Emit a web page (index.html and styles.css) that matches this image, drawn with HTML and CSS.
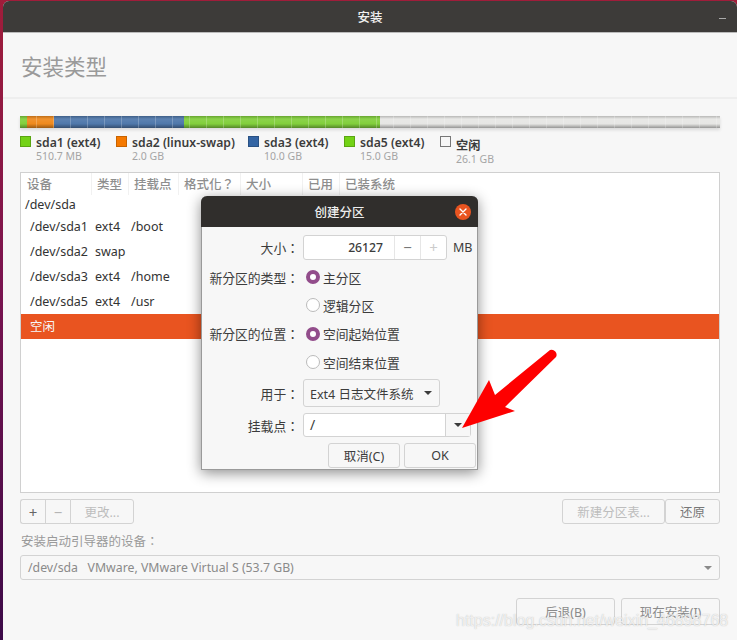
FILE: index.html
```html
<!DOCTYPE html>
<html>

<head>
  <meta charset="utf-8">
  <title>安装</title>
  <link rel="stylesheet" href="styles.css">
</head>

<body>
<div class="window">
  <div class="titlebar">
    <span class="titlebar-text">安装</span>
    <span class="minimize"></span>
  </div>
  <div class="page-head">安装类型</div>
  <div class="content">

    <div class="diskbar">
      <div class="seg green seg1"></div>
      <div class="seg orange seg2"></div>
      <div class="seg blue seg3"></div>
      <div class="seg green seg4"></div>
      <div class="seg free seg5"></div>
    </div>

    <div class="legend">
      <div class="legend-item"><span class="swatch green"></span><div><div class="legend-name">sda1 (ext4)</div><div class="legend-size">510.7 MB</div></div></div>
      <div class="legend-item"><span class="swatch orange"></span><div><div class="legend-name">sda2 (linux-swap)</div><div class="legend-size">2.0 GB</div></div></div>
      <div class="legend-item"><span class="swatch blue"></span><div><div class="legend-name">sda3 (ext4)</div><div class="legend-size">10.0 GB</div></div></div>
      <div class="legend-item"><span class="swatch green"></span><div><div class="legend-name">sda5 (ext4)</div><div class="legend-size">15.0 GB</div></div></div>
      <div class="legend-item"><span class="swatch free"></span><div class="legend-free"><div class="legend-name">空闲</div><div class="legend-size">26.1 GB</div></div></div>
    </div>

    <div class="tree">
      <div class="tree-head">
        <span>设备</span><span>类型</span><span>挂载点</span><span>格式化？</span><span>大小</span><span>已用</span><span>已装系统</span>
      </div>
      <div class="tree-row disk"><span>/dev/sda</span></div>
      <div class="tree-row"><span>/dev/sda1</span><span>ext4</span><span>/boot</span></div>
      <div class="tree-row"><span>/dev/sda2</span><span>swap</span><span></span></div>
      <div class="tree-row"><span>/dev/sda3</span><span>ext4</span><span>/home</span></div>
      <div class="tree-row"><span>/dev/sda5</span><span>ext4</span><span>/usr</span></div>
      <div class="tree-row selected"><span>空闲</span></div>
    </div>

    <div class="tools">
      <div class="toolgroup">
        <button class="btn tool-small tool-add">+</button>
        <button class="btn tool-small off">−</button>
        <button class="btn tool-change off">更改...</button>
      </div>
      <div class="toolgroup">
        <button class="btn tool-table off">新建分区表...</button>
        <button class="btn tool-revert">还原</button>
      </div>
    </div>

    <div class="boot-label">安装启动引导器的设备：</div>
    <div class="boot-combo">
      <span>/dev/sda&nbsp;&nbsp;&nbsp;VMware, VMware Virtual S (53.7 GB)</span>
      <span class="caret grey"></span>
    </div>

    <div class="actions">
      <button class="btn action">后退(B)</button>
      <button class="btn action">现在安装(I)</button>
    </div>
  </div>
</div>

<div class="dialog">
  <div class="dialog-title">
    <span>创建分区</span>
    <span class="close">
      <svg width="8" height="8" viewBox="0 0 8 8"><path d="M1 1L7 7M7 1L1 7" stroke="#fff" stroke-width="1.4" stroke-linecap="round"/></svg>
    </span>
  </div>
  <div class="dialog-body">
    <div class="form-row size-row">
      <label>大小：</label>
      <div class="spin">
        <span class="spin-value">26127</span>
        <span class="spin-btn">−</span>
        <span class="spin-btn dim">+</span>
      </div>
      <span class="unit">MB</span>
    </div>
    <div class="form-row radio-row">
      <label>新分区的类型：</label>
      <span class="radio on"></span><span class="radio-text">主分区</span>
    </div>
    <div class="form-row radio-row">
      <label></label>
      <span class="radio"></span><span class="radio-text">逻辑分区</span>
    </div>
    <div class="form-row radio-row">
      <label>新分区的位置：</label>
      <span class="radio on"></span><span class="radio-text">空间起始位置</span>
    </div>
    <div class="form-row radio-row">
      <label></label>
      <span class="radio"></span><span class="radio-text">空间结束位置</span>
    </div>
    <div class="form-row use-row">
      <label>用于：</label>
      <div class="use-combo"><span>Ext4 日志文件系统</span><span class="caret"></span></div>
    </div>
    <div class="form-row mount-row">
      <label>挂载点：</label>
      <div class="mount">
        <span class="mount-value">/</span>
        <span class="mount-btn"><span class="caret"></span></span>
      </div>
    </div>
    <div class="dialog-actions">
      <button class="btn dialog-btn">取消(C)</button>
      <button class="btn dialog-btn">OK</button>
    </div>
  </div>
</div>

<svg class="arrow" width="120" height="100" viewBox="0 0 120 100">
  <path d="M12 86L39 38L45 53L100 8A5 5 0 0 1 106 15L55 65L65 69Z" fill="#fe0000"/>
</svg>

<div class="watermark">https://blog.csdn.net/weixin_46898768</div>
</body>
</html>
```

FILE: styles.css
```css
html, body {
  margin: 0px;
  padding: 0px;
  height: 640px;
  overflow: hidden;
}
body {
  background: linear-gradient(to bottom, #a01d3a, #7a1450 45%, #3c0a48);
  color: #3c3c3c;
  font: 13px "Noto Sans", "Noto Sans CJK SC", sans-serif;
}
button { font: 12.5px "Noto Sans", "Noto Sans CJK SC", sans-serif; padding: 0; }

.window {
  margin: 1px 0 0 3px;
  height: 639px;
  background: #f7f7f7;
  border-radius: 6px 6px 0 0;
  overflow: hidden;
}
.titlebar {
  height: 31px;
  background: #3d3b39;
  border-bottom: 1px solid #bbb;
  display: flex;
  align-items: center;
  justify-content: center;
  position: relative;
  color: #f0f0f0;
  font-size: 12.5px;
  font-weight: 500;
}
.minimize {
  position: absolute;
  right: 11px;
  top: 17px;
  width: 7px;
  height: 1px;
  background: #aaa;
}
.page-head {
  height: 66px;
  padding-left: 18px;
  box-sizing: border-box;
  border-bottom: 2px solid #eee;
  color: #9a9a9a;
  font-size: 21.5px;
  line-height: 68px;
}
.content { padding: 17px 17px 0 17px; }

.diskbar {
  display: flex;
  height: 12px;
  position: relative;
  box-shadow: 0 2px 3px rgba(0,0,0,.12);
}
.diskbar:after {
  content: "";
  position: absolute;
  left: 0; right: 0; top: 0; bottom: 0;
  background:
    repeating-linear-gradient(to right, transparent 0, transparent 16px, rgba(255,255,255,.22) 16px, rgba(255,255,255,.22) 17px),
    linear-gradient(to bottom, rgba(0,0,0,.2), rgba(255,255,255,.08) 25%, rgba(0,0,0,0) 65%, rgba(0,0,0,.35));
}
.seg { height: 100%; }
.seg1 { width: 7px; }
.seg2 { width: 27px; }
.seg3 { width: 130px; }
.seg4 { width: 196px; }
.seg5 { width: 340px; }
.seg.green { background: #82cf3c; }
.seg.orange { background: #ef8a1e; }
.seg.blue { background: #4f78ab; }
.seg.free { background: #e6e6e4; }

.legend {
  display: grid;
  grid-template-columns: 96px 132px 96px 96px 1fr;
  margin-top: 8px;
  height: 36px;
}
.legend-item { display: flex; align-items: flex-start; }
.swatch {
  width: 9px;
  height: 9px;
  margin-right: 5px;
  border: 1px solid #777;
  flex-shrink: 0;
}
.swatch.green { background: #73d216; border-color: #5aa511; }
.swatch.orange { background: #f57900; border-color: #c86300; }
.swatch.blue { background: #3465a4; border-color: #2a5284; }
.swatch.free { background: #f7f7f7; }
.legend-name { font-size: 12.2px; font-weight: 600; line-height: 13px; color: #3c3c3c; white-space: nowrap; }
.legend-size { font-size: 10.5px; line-height: 15px; color: #a5a5a5; }
.legend-free { margin-top: 3px; }

.tree {
  height: 321px;
  background: #fff;
  border: 1px solid #d0d0d0;
  box-sizing: border-box;
}
.tree-head {
  display: grid;
  grid-template-columns: 71px 37px 50px 62px 62px 37px 1fr;
  height: 22px;
  align-items: center;
  color: #8e8e8e;
  font-family: "Noto Sans", "Noto Sans CJK TC", sans-serif;
  font-size: 12.5px;
  font-weight: 500;
}
.tree-head span {
  height: 22px;
  line-height: 23px;
  padding-left: 5px;
  border-right: 1px solid #f1f1f1;
  white-space: nowrap;
  overflow: hidden;
}
.tree-head span:first-child { padding-left: 6px; }
.tree-head span:last-child { border-right: 0; }
.tree-row {
  display: grid;
  grid-template-columns: 65px 36px 1fr;
  height: 25px;
  line-height: 25px;
  padding-left: 9px;
  font-size: 12.5px;
  color: #333;
}
.tree-row.disk { height: 19px; line-height: 19px; padding-left: 4px; }
.tree-row.selected {
  background: #e95420;
  color: #f6f6f6;
  display: block;
}

.tools {
  display: flex;
  justify-content: space-between;
  margin-top: 6px;
}
.toolgroup { display: flex; }
.btn {
  height: 25px;
  background: #f7f7f7;
  border: 1px solid #d3d3d3;
  border-radius: 3px;
  color: #666;
  box-sizing: border-box;
}
.btn.off { color: #bdbdbd; }
.tool-small { width: 25px; border-radius: 0; border-right: 0; font-size: 15px; color: #666; }
.tool-small.off { color: #b5b5b5; }
.tool-add { border-radius: 3px 0 0 3px; }
.tool-change { width: 64px; border-radius: 0 3px 3px 0; }
.tool-table { width: 103px; }
.tool-revert { width: 55px; color: #777; }

.boot-label {
  margin-top: 8px;
  height: 23px;
  padding-left: 1px;
  line-height: 19px;
  color: #9a9a9a;
  font-family: "Noto Sans", "Noto Sans CJK TC", sans-serif;
  font-size: 12.5px;
}
.boot-combo {
  display: flex;
  justify-content: space-between;
  align-items: center;
  height: 25px;
  padding: 0 7px 0 7px;
  border: 1px solid #d3d3d3;
  border-radius: 3px;
  box-sizing: border-box;
  color: #8a8a8a;
  font-size: 12.3px;
}
.caret {
  width: 0;
  height: 0;
  border-left: 4px solid transparent;
  border-right: 4px solid transparent;
  border-top: 4px solid #3c3c3c;
}
.caret.grey { border-top-color: #8a8a8a; }

.actions {
  display: flex;
  justify-content: flex-end;
  gap: 6px;
  margin-top: 18px;
}
.action { width: 99px; height: 27px; color: #8a8a8a; }

/* dialog sits above the window */
.dialog {
  position: absolute;
  left: 201px;
  top: 196px;
  width: 277px;
  height: 274px;
  background: #f7f7f7;
  border-radius: 6px 6px 0 0;
  box-shadow: 0 3px 14px rgba(0,0,0,.45);
  border: 1px solid #9a9a9a;
  border-top: 0;
  box-sizing: border-box;
}
.dialog-title {
  height: 31px;
  margin: 0 -1px;
  background: #302e2c;
  border-radius: 6px 6px 0 0;
  color: #eee;
  font-size: 12.5px;
  font-weight: 500;
  display: flex;
  align-items: center;
  justify-content: center;
  position: relative;
}
.close {
  position: absolute;
  right: 7px;
  top: 8px;
  width: 16px;
  height: 16px;
  border-radius: 50%;
  background: #e95420;
  display: flex;
  align-items: center;
  justify-content: center;
}
.dialog-body { padding-top: 8px; }
.form-row {
  display: flex;
  align-items: center;
  font-size: 12.8px;
}
.form-row label {
  width: 97px;
  margin-right: 4px;
  font-family: "Noto Sans", "Noto Sans CJK TC", sans-serif;
  font-size: 12.8px;
  text-align: right;
  flex-shrink: 0;
}
.size-row { height: 25px; }
.spin {
  display: flex;
  width: 144px;
  height: 25px;
  background: #fff;
  border: 1px solid #d3d3d3;
  border-radius: 3px;
  box-sizing: border-box;
  line-height: 23px;
}
.spin-value { flex: 1; text-align: right; padding-right: 11px; font-size: 12.2px; font-weight: 500; }
.spin-btn {
  width: 25px;
  text-align: center;
  border-left: 1px solid #e6e6e6;
  color: #777;
  font-size: 15px;
}
.spin-btn.dim { color: #ccc; }
.unit { margin-left: 6px; font-size: 12.5px; }
.radio-row { height: 28.3px; }
.size-row + .radio-row { margin-top: 3px; }
.radio {
  width: 14px;
  height: 14px;
  margin-left: 3px;
  border-radius: 50%;
  border: 1px solid #bbb;
  background: #fff;
  box-sizing: border-box;
}
.radio.on {
  border: 4px solid #924d8b;
  background: #fff;
}
.radio-text { margin-left: 3px; }
.use-row { margin-top: 3px; height: 28px; }
.use-combo {
  display: flex;
  align-items: center;
  justify-content: space-between;
  width: 137px;
  height: 28px;
  padding: 0 7px 0 6px;
  background: #f7f7f7;
  border: 1px solid #d3d3d3;
  border-radius: 3px;
  box-sizing: border-box;
  font-size: 12.5px;
  white-space: nowrap;
}
.mount-row { margin-top: 6px; height: 24px; }
.mount {
  display: flex;
  width: 168px;
  height: 24px;
  background: #fff;
  border: 1px solid #d3d3d3;
  border-radius: 3px;
  box-sizing: border-box;
}
.mount-value { flex: 1; padding-left: 6px; line-height: 22px; font-size: 14px; }
.mount-btn {
  width: 24px;
  border-left: 1px solid #d3d3d3;
  display: flex;
  align-items: center;
  justify-content: center;
  background: #f7f7f7;
}
.dialog-actions {
  display: flex;
  justify-content: flex-end;
  gap: 4px;
  margin-top: 6px;
  padding-right: 1px;
}
.dialog-btn { width: 72px; height: 25px; color: #3c3c3c; }

.arrow {
  position: absolute;
  left: 450px;
  top: 342px;
}
.watermark {
  position: absolute;
  left: 456px;
  top: 612px;
  font: 16px "Liberation Sans", sans-serif;
  color: rgba(255,255,255,.75);
  text-shadow: 0 0 1px rgba(120,120,120,.5);
  white-space: nowrap;
}
```
